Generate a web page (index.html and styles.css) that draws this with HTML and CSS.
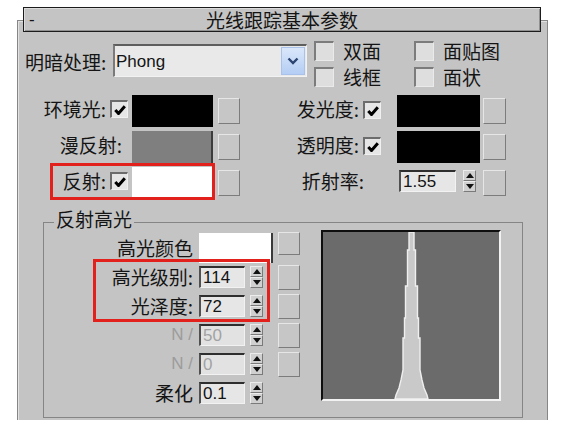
FILE: index.html
```html
<!DOCTYPE html>
<html lang="zh-CN">
<head>
    <meta charset="UTF-8">
    <meta name="viewport" content="width=device-width, initial-scale=1.0">
    <title>光线跟踪基本参数</title>
    <link rel="stylesheet" href="styles.css">
</head>
<body>
    <div class="rollout">
        <div class="rollout-head">
            <span class="minus">-</span>
            <span class="title">光线跟踪基本参数</span>
            <span></span>
        </div>

        <div class="shade-row">
            <span class="shade-label">明暗处理:</span>
            <div class="dropdown">
                <span class="dd-text">Phong</span>
                <span class="dd-btn">
                    <svg width="12" height="8" viewBox="0 0 12 8"><path d="M1.5 1.5 L6 6 L10.5 1.5" fill="none" stroke="#2b4470" stroke-width="2.4"/></svg>
                </span>
            </div>
            <div class="opts">
                <div class="opt"><span class="cb big"></span>双面</div>
                <div class="opt"><span class="cb big"></span>面贴图</div>
                <div class="opt"><span class="cb big"></span>线框</div>
                <div class="opt"><span class="cb big"></span>面状</div>
            </div>
        </div>

        <div class="colors">
            <div class="crow">
                <div class="half left">
                    <span class="lbl l-lbl">环境光:</span>
                    <span class="cb l-cb"><svg width="12" height="10" viewBox="0 0 12 10"><path d="M1.3 5 L4.5 8.5 L10.8 1.3" fill="none" stroke="#000" stroke-width="3"/></svg></span>
                    <span class="swatch l-sw black"></span>
                    <span class="mapbtn"></span>
                </div>
                <div class="half">
                    <span class="lbl r-lbl">发光度:</span>
                    <span class="cb r-cb"><svg width="12" height="10" viewBox="0 0 12 10"><path d="M1.3 5 L4.5 8.5 L10.8 1.3" fill="none" stroke="#000" stroke-width="3"/></svg></span>
                    <span class="swatch r-sw black"></span>
                    <span class="mapbtn r-btn"></span>
                </div>
            </div>
            <div class="crow">
                <div class="half left">
                    <span class="lbl l-wide">漫反射:</span>
                    <span class="swatch l-sw grey"></span>
                    <span class="mapbtn"></span>
                </div>
                <div class="half">
                    <span class="lbl r-lbl">透明度:</span>
                    <span class="cb r-cb"><svg width="12" height="10" viewBox="0 0 12 10"><path d="M1.3 5 L4.5 8.5 L10.8 1.3" fill="none" stroke="#000" stroke-width="3"/></svg></span>
                    <span class="swatch r-sw black"></span>
                    <span class="mapbtn r-btn"></span>
                </div>
            </div>
            <div class="crow reflect">
                <div class="half left">
                    <span class="lbl l-lbl">反射:</span>
                    <span class="cb l-cb"><svg width="12" height="10" viewBox="0 0 12 10"><path d="M1.3 5 L4.5 8.5 L10.8 1.3" fill="none" stroke="#000" stroke-width="3"/></svg></span>
                    <span class="swatch l-sw white"></span>
                    <span class="mapbtn"></span>
                </div>
                <div class="half">
                    <span class="lbl r-wide">折射率:</span>
                    <div class="spinner ior">
                        <span class="field wide">1.55</span>
                        <span class="arrows"><span class="up"></span><span class="dn"></span></span>
                    </div>
                    <span class="mapbtn ior-btn"></span>
                </div>
                <span class="mark mark-reflect"></span>
            </div>
        </div>

        <fieldset class="spec">
            <legend>反射高光</legend>
            <div class="spec-body">
                <div class="spec-rows">
                    <div class="srow">
                        <span class="s-lbl">高光颜色</span>
                        <div class="s-main"><span class="s-sw"></span></div>
                        <span class="mapbtn s-btn first"></span>
                    </div>
                    <div class="srow">
                        <span class="s-lbl">高光级别:</span>
                        <div class="s-main spinner">
                            <span class="field">114</span>
                            <span class="arrows"><span class="up"></span><span class="dn"></span></span>
                        </div>
                        <span class="mapbtn s-btn"></span>
                    </div>
                    <div class="srow">
                        <span class="s-lbl">光泽度:</span>
                        <div class="s-main spinner">
                            <span class="field">72</span>
                            <span class="arrows"><span class="up"></span><span class="dn"></span></span>
                        </div>
                        <span class="mapbtn s-btn"></span>
                    </div>
                    <div class="srow off">
                        <span class="s-lbl">N /</span>
                        <div class="s-main spinner">
                            <span class="field">50</span>
                            <span class="arrows"><span class="up"></span><span class="dn"></span></span>
                        </div>
                        <span class="mapbtn s-btn"></span>
                    </div>
                    <div class="srow off">
                        <span class="s-lbl">N /</span>
                        <div class="s-main spinner">
                            <span class="field">0</span>
                            <span class="arrows"><span class="up"></span><span class="dn"></span></span>
                        </div>
                        <span class="mapbtn s-btn"></span>
                    </div>
                    <div class="srow">
                        <span class="s-lbl">柔化</span>
                        <div class="s-main spinner">
                            <span class="field">0.1</span>
                            <span class="arrows"><span class="up"></span><span class="dn"></span></span>
                        </div>
                    </div>
                    <span class="mark mark-spec"></span>
                </div>

                <div class="graph">
                    <svg width="176" height="167" viewBox="0 0 176 167">
                        <polygon points="91,0 91,18 92.5,18 92.5,54 94.5,54 94.5,86 95.5,86 95.5,106 97,106 97,138 99,148 101,156 104,163 105,167 72,167 73,163 76,156 78,148 80,138 80,106 81.5,106 81.5,86 82.5,86 82.5,54 84.5,54 84.5,18 86,18 86,0" fill="#c9c9c9" stroke="#efefef" stroke-width="1.4"/>
                    </svg>
                </div>
            </div>
        </fieldset>
    </div>
</body>
</html>
```

FILE: styles.css
```css
* {
    box-sizing: border-box;
}
body {
    margin: 0;
    background-color: #fff;
    font-family: "Noto Sans CJK SC", "Noto Sans", sans-serif;
    font-size: 19px;
    color: #141414;
}

/* rollout frame */
.rollout {
    width: 531px;
    height: 400px;
    margin: 20px 0 0 17px;
    background-color: #c4c4c4;
    border: 1px solid #868686;
    border-bottom: none;
    box-shadow: inset 1px 1px 0 #e2e2e2;
}
.rollout-head {
    display: grid;
    grid-template-columns: 1fr auto 1fr;
    align-items: center;
    height: 25px;
    margin: -14px 6px 0 5px;
    padding: 0 5px;
    background-color: #c4c4c4;
    border: 1px solid #1c1c1c;
    box-shadow: inset 1px 1px 0 #dcdcdc, inset -1px -1px 0 #909090;
    line-height: 23px;
}
.minus {
    font-family: "Liberation Sans", sans-serif;
    font-size: 17px;
}

/* shading row */
.shade-row {
    display: flex;
    height: 46px;
    margin-top: 8px;
    padding-left: 7px;
}
.shade-label {
    width: 88px;
    margin-top: 10px;
    line-height: 24px;
}
.dropdown {
    display: flex;
    align-items: center;
    justify-content: space-between;
    width: 194px;
    height: 33px;
    margin-top: 4px;
    background-color: #e9e9e9;
    border-top: 2px solid #5e5e5e;
    border-left: 2px solid #7a7a7a;
    border-right: 1px solid #f2f2f2;
    border-bottom: 1px solid #f2f2f2;
    font-family: "Liberation Sans", sans-serif;
    font-size: 17px;
}
.dd-text {
    padding: 2px 0 0 1px;
}
.dd-btn {
    display: flex;
    align-items: center;
    justify-content: center;
    width: 24px;
    height: 28px;
    margin-right: 1px;
    background: linear-gradient(#dae7fb, #b4cdf4);
    border: 1px solid #a9c2ea;
}
.opts {
    display: grid;
    grid-template-columns: 100px auto;
    grid-auto-rows: 21px;
    row-gap: 5px;
    margin-left: 7px;
}
.opt {
    display: flex;
    align-items: center;
    line-height: 21px;
}

/* checkboxes, swatches, map buttons */
.cb {
    display: flex;
    align-items: center;
    justify-content: center;
    flex: none;
    width: 18px;
    height: 18px;
    background-color: #e6e6e6;
    border-top: 2px solid #6c6c6c;
    border-left: 2px solid #6c6c6c;
    border-right: 1px solid #f0f0f0;
    border-bottom: 1px solid #f0f0f0;
}
.cb.big {
    width: 20px;
    height: 20px;
    margin-right: 9px;
    background-color: #dedede;
    border-color: #7c7c7c #eaeaea #eaeaea #7c7c7c;
}
.swatch {
    flex: none;
    height: 32px;
}
.black {
    background-color: #000;
}
.grey {
    background-color: #7f7f7f;
    border-right: 2px solid #3c3c3c;
}
.white {
    background-color: #fff;
}
.mapbtn {
    flex: none;
    width: 22px;
    height: 26px;
    margin: 3px 0 0 5px;
    background-color: #c6c6c6;
    border: 1px solid;
    border-color: #e6e6e6 #7c7c7c #7c7c7c #e6e6e6;
}

/* colour rows */
.colors {
    margin-top: 9px;
}
.crow {
    display: flex;
    height: 36px;
}
.crow.reflect {
    position: relative;
}
.half {
    display: flex;
    align-items: flex-start;
}
.half.left {
    width: 242px;
}
.lbl {
    flex: none;
    text-align: right;
    line-height: 28px;
}
.l-lbl {
    width: 88px;
}
.l-wide {
    width: 110px;
    padding-right: 6px;
}
.l-cb {
    margin: 5px 0 0 4px;
}
.l-sw {
    width: 81px;
    margin-left: 4px;
}
.r-lbl {
    width: 99px;
}
.r-wide {
    width: 137px;
    padding-right: 33px;
}
.r-cb {
    margin: 6px 0 0 4px;
}
.r-sw {
    width: 83px;
    margin-left: 16px;
}
.r-btn {
    width: 23px;
    margin-left: 3px;
}
.ior {
    margin: 3px 0 0 2px;
}
.ior-btn {
    width: 23px;
    margin-left: 7px;
}

/* spinners */
.spinner {
    display: flex;
}
.field {
    width: 46px;
    height: 22px;
    padding-left: 2px;
    background-color: #e6e6e6;
    border-top: 2px solid #2e2e2e;
    border-left: 2px solid #505050;
    border-right: 1px solid #f2f2f2;
    border-bottom: 1px solid #f2f2f2;
    font-family: "Liberation Sans", sans-serif;
    font-size: 17px;
    line-height: 19px;
}
.field.wide {
    width: 57px;
}
.arrows {
    display: flex;
    flex-direction: column;
    width: 13px;
    height: 22px;
    margin-left: 5px;
}
.ior .arrows {
    margin-left: 7px;
}
.arrows span {
    flex: 1;
    display: flex;
    align-items: center;
    justify-content: center;
    background-color: #d0d0d0;
    border: 1px solid;
    border-color: #ececec #7a7a7a #7a7a7a #ececec;
}
.arrows .up::after {
    content: "";
    border: 4px solid transparent;
    border-top: 0;
    border-bottom: 5px solid #111;
}
.arrows .dn::after {
    content: "";
    border: 4px solid transparent;
    border-bottom: 0;
    border-top: 5px solid #111;
}

/* specular group */
.spec {
    width: 480px;
    margin: 6px 0 0 25px;
    padding: 0 0 10px;
    border: 1px solid #858585;
    min-inline-size: auto;
}
.spec legend {
    margin-left: 10px;
    padding: 0 2px 6px;
    line-height: 20px;
}
.spec-body {
    display: flex;
    margin-top: -2px;
}
.spec-rows {
    position: relative;
}
.srow {
    display: flex;
    align-items: flex-start;
    height: 29px;
}
.s-lbl {
    width: 155px;
    padding-right: 6px;
    text-align: right;
    line-height: 29px;
}
.s-main {
    width: 79px;
}
.spinner.s-main {
    margin-top: 4px;
}
.s-sw {
    display: block;
    width: 74px;
    height: 30px;
    background-color: #fff;
    border-right: 2px solid #3a3a3a;
}
.s-btn {
    height: 25px;
    margin: 3px 0 0 0;
}
.s-btn.first {
    height: 23px;
    margin-top: -1px;
}
.srow.off .s-lbl {
    color: #9c9c9c;
    font-family: "Liberation Sans", sans-serif;
    font-size: 17px;
}
.srow.off .field {
    color: #a2a2a2;
    background-color: #e2e2e2;
}

/* highlight curve */
.graph {
    width: 180px;
    height: 171px;
    margin: -3px 0 0 21px;
    background-color: #6b6b6b;
    border-top: 2px solid #0e0e0e;
    border-left: 2px solid #0e0e0e;
    border-right: 2px solid #f2f2f2;
    border-bottom: 2px solid #f2f2f2;
}
.graph svg {
    display: block;
}

/* red annotation boxes */
.mark {
    position: absolute;
    border: 3px solid #e2211c;
}
.mark-reflect {
    left: 32px;
    top: -4px;
    width: 165px;
    height: 37px;
}
.mark-spec {
    left: 49px;
    top: 26px;
    width: 177px;
    height: 63px;
}
```
